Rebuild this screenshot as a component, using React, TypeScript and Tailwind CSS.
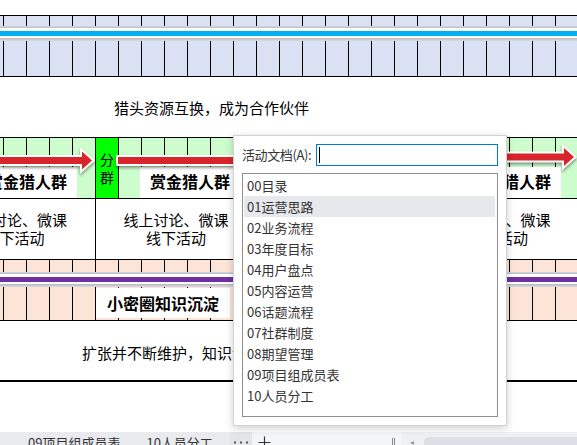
import React from "react";

const cells = Array.from({ length: 25 }, (_, i) => i);

function GridCells({ greenCols }: { greenCols?: boolean }) {
  return (
    <>
      <div className="w-[3px] shrink-0" />
      {cells.map((i) => {
        const special = greenCols && (i === 4 || i === 11 || i === 18);
        return (
          <div
            key={i}
            className={
              special
                ? "w-[23px] shrink-0 border-l border-black bg-[#00ff00] flex flex-col items-center pt-[12px] text-[14px] leading-[18px] text-black"
                : "w-[23px] shrink-0 border-l border-black"
            }
          >
            {special ? (
              <>
                <span>分</span>
                <span>群</span>
              </>
            ) : null}
          </div>
        );
      })}
    </>
  );
}

function Band({ color }: { color: string }) {
  return (
    <div className="flex flex-col h-[15px]">
      <div className="h-[2px] bg-[linear-gradient(to_bottom,#d6d9df,#b9bdc5)]" />
      <div className="h-[3px] bg-white" />
      <div className={"h-[5px] " + color} />
      <div className="h-[2px] bg-white" />
      <div className="h-[3px] bg-[linear-gradient(to_bottom,#b4b8c0,#dadde3)]" />
    </div>
  );
}

function WhiteBox({ left, text }: { left: string; text: string }) {
  return (
    <div
      className={
        "absolute top-[29px] bottom-0 w-[100px] bg-white flex items-center justify-center pb-[4px] text-[16px] font-bold text-black whitespace-nowrap " +
        left
      }
    >
      {text}
    </div>
  );
}

const listItems = [
  "00目录",
  "01运营思路",
  "02业务流程",
  "03年度目标",
  "04用户盘点",
  "05内容运营",
  "06话题流程",
  "07社群制度",
  "08期望管理",
  "09项目组成员表",
  "10人员分工",
];

export default function App() {
  return (
    <div className="relative w-[577px] h-[445px] overflow-hidden bg-white flex flex-col font-['Noto_Sans_CJK_SC','Noto_Sans',sans-serif] text-black">
      {/* top spacer with line at y=15 */}
      <div className="h-[16px] shrink-0 border-b border-black" />

      {/* blue row */}
      <div className="relative flex h-[61px] shrink-0 border-b border-black bg-[#d9e1f2] overflow-hidden">
        <GridCells />
        <div className="absolute inset-x-0 top-[10px]">
          <Band color="bg-[#00b0f0]" />
        </div>
      </div>

      {/* white row */}
      <div className="flex items-center h-[61px] shrink-0 border-b border-black pl-[114px] pt-[2px] text-[15px]">
        猎头资源互换，成为合作伙伴
      </div>

      {/* green row */}
      <div className="relative flex h-[61px] shrink-0 border-b border-black bg-[#cdfccd] overflow-hidden">
        <GridCells greenCols />
        <WhiteBox left="left-[-23px]" text="赏金猎人群" />
        <WhiteBox left="left-[140px]" text="赏金猎人群" />
        <WhiteBox left="left-[461px]" text="赏金猎人群" />
        <svg
          className="absolute left-0 top-0 drop-shadow-[0_2px_1.5px_rgba(0,0,0,0.4)]"
          width="577"
          height="60"
          viewBox="0 0 577 60"
        >
          <g fill="#d6262b" stroke="#ffffff" strokeWidth="4" strokeLinejoin="miter" paintOrder="stroke">
            <polygon points="-10,19 82,19 82,13.5 92,22.5 82,31.5 82,26 -10,26" />
            <polygon points="118,19 245,19 245,13.5 255,22.5 245,31.5 245,26 118,26" />
            <polygon points="282,15.5 564,15.5 564,10 574,19 564,28 564,22.5 282,22.5" />
          </g>
        </svg>
      </div>

      {/* text row */}
      <div className="flex h-[61px] shrink-0 border-b border-black overflow-hidden text-[15px] leading-[18px]">
        {[0, 1, 2, 3].map((i) => (
          <div
            key={i}
            className={
              i === 0
                ? "ml-[-66px] w-[161px] shrink-0 flex flex-col items-center justify-center"
                : "w-[161px] shrink-0 border-l border-black flex flex-col items-center justify-center"
            }
          >
            <span className="whitespace-nowrap">线上讨论、微课</span>
            <span className="whitespace-nowrap">线下活动</span>
          </div>
        ))}
      </div>

      {/* peach row */}
      <div className="relative flex h-[61px] shrink-0 border-b border-black bg-[#fce4d6] overflow-hidden">
        <GridCells />
        <div className="absolute inset-x-0 top-[12px]">
          <Band color="bg-[#7030a0]" />
        </div>
        <div className="absolute left-[96px] top-[28px] w-[134px] h-[30px] bg-white flex items-center justify-center text-[16px] font-bold whitespace-nowrap">
          小密圈知识沉淀
        </div>
      </div>

      {/* bottom white row */}
      <div className="flex items-center h-[59px] shrink-0 pl-[82px] pt-[5px] text-[15px] whitespace-nowrap">
        扩张并不断维护，知识沉淀
      </div>
      <div className="h-[2px] shrink-0 bg-black" />
      <div className="h-[50px] shrink-0" />

      {/* tab bar */}
      <div className="flex h-[13px] shrink-0 overflow-hidden text-[13px] leading-[20px] text-[#333]">
        <div className="w-[230px] shrink-0 bg-[#e9ebee] flex pt-[1px] whitespace-nowrap">
          <span className="ml-[28px]">09项目组成员表</span>
          <span className="ml-[26px]">10人员分工</span>
        </div>
        <div className="w-[22px] shrink-0 bg-[#e3e5e9]">
          <svg width="22" height="13" viewBox="0 0 22 13">
            <rect x="4" y="9.5" width="2" height="2" fill="#555" />
            <rect x="10" y="9.5" width="2" height="2" fill="#555" />
            <rect x="16" y="9.5" width="2" height="2" fill="#555" />
          </svg>
        </div>
        <div className="w-[150px] shrink-0 bg-[#f4f5f7] flex">
          <svg className="ml-[6px] mt-[4px]" width="13" height="13" viewBox="0 0 13 13">
            <path d="M6.5 0.5V13M0.5 6.5H12.5" stroke="#333" strokeWidth="1.2" />
          </svg>
          <div className="flex-1" />
          <svg className="mr-[7px] mt-[6px]" width="3" height="7" viewBox="0 0 3 7">
            <path d="M0.5 0V7M2.5 0V7" stroke="#888" strokeWidth="1" />
          </svg>
        </div>
        <div className="flex-1 bg-[#eef0f3] flex">
          <svg className="ml-[8px] mt-[9px]" width="4" height="4" viewBox="0 0 4 4">
            <polygon points="0,2 4,0 4,4" fill="#999" />
          </svg>
          <div className="ml-[10px] mt-[5px] flex-1 bg-[#dcdfe4] rounded-tl-[5px]" />
        </div>
      </div>

      {/* popup */}
      <div className="absolute left-[233px] top-[135px] w-[274px] h-[291px] bg-white border border-[#d3d3d3] shadow-[0_2px_8px_rgba(0,0,0,0.2)] p-[8px] flex flex-col text-[13px] text-[#333]">
        <div className="flex items-center h-[22px] shrink-0">
          <span className="w-[74px] shrink-0 whitespace-nowrap tracking-[-0.4px]">活动文档(A):</span>
          <div className="relative flex-1 h-[22px] border border-[#0078d7]">
            <div className="absolute left-[2px] top-[2px] w-px h-[16px] bg-black" />
          </div>
        </div>
        <div className="mt-[7px] flex-1 border border-[#8f8f8f] pt-[1px] pl-[1px] pr-[2px]">
          {listItems.map((t, i) => (
            <div
              key={t}
              className={
                i === 1
                  ? "h-[21px] leading-[21px] pl-[3px] bg-[#e6e8ec] whitespace-nowrap"
                  : "h-[21px] leading-[21px] pl-[3px] whitespace-nowrap"
              }
            >
              {t}
            </div>
          ))}
        </div>
      </div>
    </div>
  );
}
